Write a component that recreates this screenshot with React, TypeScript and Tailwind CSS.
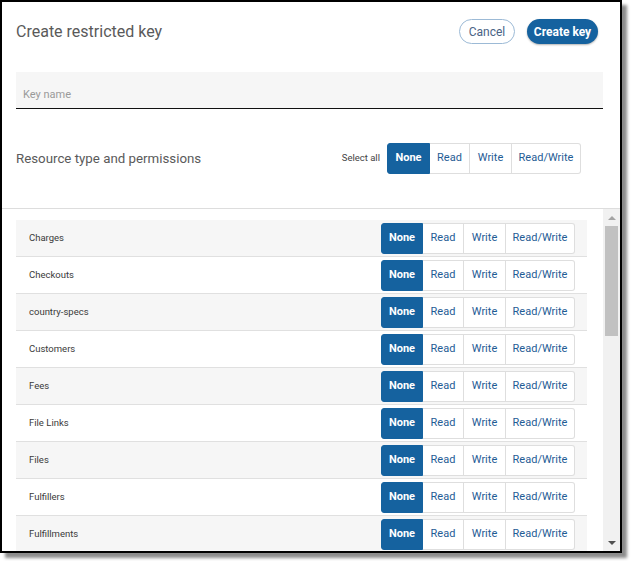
import React from 'react';

const resources = [
  'Charges',
  'Checkouts',
  'country-specs',
  'Customers',
  'Fees',
  'File Links',
  'Files',
  'Fulfillers',
  'Fulfillments',
];

const PermissionGroup: React.FC<{ widths: number[] }> = ({ widths }) => {
  const labels = ['None', 'Read', 'Write', 'Read/Write'];
  return (
    <div className="flex h-[31px]">
      {labels.map((label, i) => (
        <button
          key={label}
          style={{ width: widths[i] }}
          className={`h-full flex items-center justify-center text-[11px] border-y border-r ${
            i === 0
              ? 'bg-[#15629f] border-[#15629f] text-white font-bold rounded-l-[3px] border-l'
              : 'bg-white border-[#dedede] text-[#1f5c95]'
          } ${i === labels.length - 1 ? 'rounded-r-[3px]' : ''}`}
        >
          {label}
        </button>
      ))}
    </div>
  );
};

export default function App() {
  return (
    <div className="w-[631px] h-[561px] bg-white" style={{ fontFamily: 'Roboto, "Noto Sans", sans-serif' }}>
      <div className="w-[622px] h-[553px] border-2 border-black bg-white flex flex-col overflow-hidden shadow-[5px_5px_3px_rgba(0,0,0,0.45)]">
        {/* Header */}
        <div className="border-b border-[#dddddd]">
          <div className="flex items-center justify-between pt-[17px] pl-[14px] pr-[22px]">
            <h1 className="text-[16px] text-[#5a5a5a] font-normal">Create restricted key</h1>
            <div className="flex gap-[12px]">
              <button className="w-[56px] h-[25px] rounded-full border border-[#9cbad6] text-[12px] text-[#4a6385] bg-white">
                Cancel
              </button>
              <button className="w-[71px] h-[25px] rounded-full bg-[#15629f] text-[12px] font-bold text-white shadow-[0_1px_2px_rgba(0,0,0,0.3)]">
                Create key
              </button>
            </div>
          </div>

          <div className="mt-[28px] ml-[14px] w-[587px] h-[37px] bg-[#f6f6f6] border-b border-[#111111] flex items-end pl-[7px] pb-[5px]">
            <span className="text-[11px] text-[#9a9a9a]">Key name</span>
          </div>

          <div className="flex items-center justify-between mt-[34px] mb-[34px] pl-[14px] pr-[39px]">
            <span className="text-[13.3px] text-[#5a5a5a]">Resource type and permissions</span>
            <div className="flex items-center gap-[7px]">
              <span className="text-[9.5px] text-[#444444]">Select all</span>
              <PermissionGroup widths={[43, 40, 42, 69]} />
            </div>
          </div>
        </div>

        {/* List */}
        <div className="flex flex-1 min-h-0">
          <div className="flex-1 overflow-hidden pt-[11px] pl-[14px] pr-[16px]">
            {resources.map((name, i) => (
              <div
                key={name}
                className={`h-[37px] flex items-center justify-between border-b border-[#e0e0e0] pl-[13px] pr-[12px] ${
                  i % 2 === 0 ? 'bg-[#f6f6f6]' : 'bg-white'
                }`}
              >
                <span className="text-[9.5px] text-[#3a3a3a]">{name}</span>
                <PermissionGroup widths={[42, 41, 42, 69]} />
              </div>
            ))}
          </div>

          {/* Scrollbar */}
          <div className="w-[17px] bg-[#f1f1f1] flex flex-col">
            <div className="h-[17px] flex items-center justify-center">
              <div className="w-0 h-0 border-x-[4px] border-x-transparent border-b-[4px] border-b-[#a3a3a3]" />
            </div>
            <div className="h-[110px] mx-[2px] bg-[#c1c1c1]" />
            <div className="flex-1" />
            <div className="h-[17px] flex items-center justify-center">
              <div className="w-0 h-0 border-x-[4px] border-x-transparent border-t-[4px] border-t-[#505050]" />
            </div>
          </div>
        </div>
      </div>
    </div>
  );
}
